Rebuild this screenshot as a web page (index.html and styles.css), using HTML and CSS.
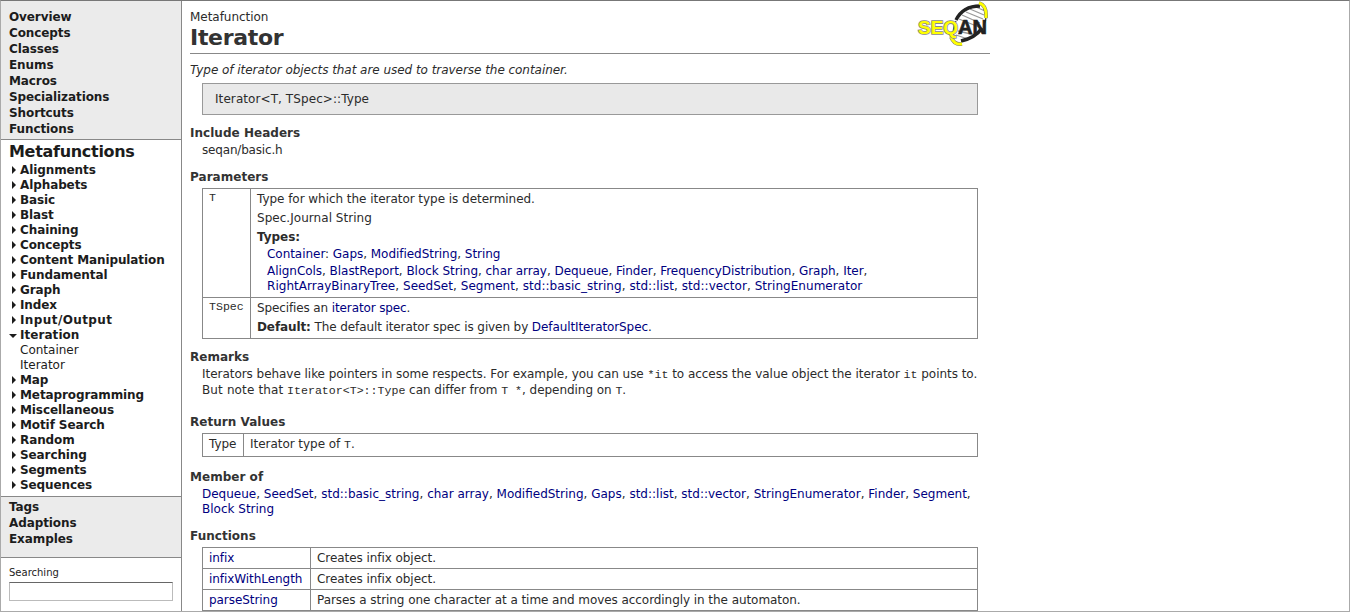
FILE: index.html
```html
<!DOCTYPE html>
<html lang="en">
<head>
<meta charset="utf-8">
<title>Iterator</title>
<link rel="stylesheet" href="styles.css">
</head>
<body>
<div class="page">
  <nav class="sidebar">
    <ul class="group group-top">
      <li>Overview</li><li>Concepts</li><li>Classes</li><li>Enums</li><li>Macros</li><li>Specializations</li><li>Shortcuts</li><li>Functions</li>
    </ul>
    <div class="current">
      <h2>Metafunctions</h2>
      <ul class="tree">
        <li>Alignments</li><li>Alphabets</li><li>Basic</li><li>Blast</li><li>Chaining</li><li>Concepts</li><li>Content Manipulation</li><li>Fundamental</li><li>Graph</li><li>Index</li><li class="loose">Input/Output</li><li class="open">Iteration</li><li class="leaf">Container</li><li class="leaf">Iterator</li><li>Map</li><li>Metaprogramming</li><li>Miscellaneous</li><li>Motif Search</li><li>Random</li><li>Searching</li><li>Segments</li><li>Sequences</li>
      </ul>
    </div>
    <ul class="group group-bottom">
      <li>Tags</li><li>Adaptions</li><li>Examples</li>
    </ul>
    <div class="search">
      <label for="q">Searching</label>
      <input id="q" type="text">
    </div>
  </nav>
  <main class="content">
    <header class="head">
      <div>
        <div class="kind">Metafunction</div>
        <h1>Iterator</h1>
      </div>
      <svg class="logo" width="74" height="46" viewBox="0 0 74 46">
        <path d="M39 38C36 26 44 9 66 5C72 16 63 33 45 40Z" fill="#fff"/>
        <path d="M50 11l17 7M54 8l14 6M60 6l9 4M46 14l18 8M42 30l17 4M40 34l12 4M43 18l20 8" stroke="#999" stroke-width="1.3"/>
        <path d="M40 19C44 11 52 5 64 5M45 40C54 38 62 33 66 27" fill="none" stroke="#222" stroke-width="3.4"/>
        <path d="M40 20C37 26 37 32 38 36M68 8C71 14 70 20 68 24" fill="none" stroke="#333" stroke-width="1.2"/>
        <path d="M63 2C70 4 70.500 11 70 17M35 36C37 41 40 44 46 43" fill="none" stroke="#777" stroke-width="3.800"/>
        <path d="M63 2C70 4 70.500 11 70 17M35 36C37 41 40 44 46 43" fill="none" stroke="#ff0" stroke-width="2.800"/>
        <text x="2" y="33" class="logo-text" textLength="69" lengthAdjust="spacingAndGlyphs"><tspan class="logo-seq">SEQ</tspan><tspan class="logo-an">AN</tspan></text>
      </svg>
    </header>
    <p class="summary">Type of iterator objects that are used to traverse the container.</p>
    <div class="signature">Iterator&lt;T, TSpec&gt;::Type</div>

    <h3>Include Headers</h3>
    <div class="text include">seqan/basic.h</div>

    <h3>Parameters</h3>
    <table class="params">
      <tr class="param-t">
        <td class="name"><code>T</code></td>
        <td>
          <p>Type for which the iterator type is determined.</p>
          <p class="wide">Spec.Journal String</p>
          <p><b>Types:</b></p>
          <div class="types"><a>Container</a>: <a>Gaps</a>, <a>ModifiedString</a>, <a>String</a></div>
          <div class="types more"><a>AlignCols</a>, <a>BlastReport</a>, <a>Block String</a>, <a>char array</a>, <a>Dequeue</a>, <a>Finder</a>, <a>FrequencyDistribution</a>, <a>Graph</a>, <a>Iter</a>,<br><span class="wide"><a>RightArrayBinaryTree</a>, <a>SeedSet</a>, <a>Segment</a>, <a>std::basic_string</a>, <a>std::list</a>, <a>std::vector</a>, <a>StringEnumerator</a></span></div>
        </td>
      </tr>
      <tr class="param-spec">
        <td class="name"><code>TSpec</code></td>
        <td>
          <p class="spec">Specifies an <a>iterator spec</a>.</p>
          <p class="tight"><b>Default:</b> The default iterator spec is given by <a>DefaultIteratorSpec</a>.</p>
        </td>
      </tr>
    </table>

    <h3>Remarks</h3>
    <div class="text remarks">Iterators behave like pointers in some respects. For example, you can use <code>*it</code> to access the value object the iterator <code>it</code> points to.<br><span class="lead">But note that</span> <code>Iterator&lt;T&gt;::Type</code> can differ from <code>T *</code>, depending on <code>T</code>.</div>

    <h3>Return Values</h3>
    <table class="returns">
      <tr><td class="name">Type</td><td>Iterator type of <code>T</code>.</td></tr>
    </table>

    <h3 class="after-returns">Member of</h3>
    <div class="text members"><a>Dequeue</a>, <a>SeedSet</a>, <a>std::basic_string</a>, <a>char array</a>, <a>ModifiedString</a>, <a>Gaps</a>, <a>std::list</a>, <a>std::vector</a>, <a>StringEnumerator</a>, <a>Finder</a>, <a>Segment</a>,<br><a>Block String</a></div>

    <h3>Functions</h3>
    <table class="functions">
      <tr><td class="name"><a>infix</a></td><td>Creates infix object.</td></tr>
      <tr><td class="name"><a>infixWithLength</a></td><td>Creates infix object.</td></tr>
      <tr><td class="name"><a>parseString</a></td><td>Parses a string one character at a time and moves accordingly in the automaton.</td></tr>
    </table>
  </main>
</div>
</body>
</html>
```
FILE: styles.css
```css
* { box-sizing: border-box; }
body {
  margin: 0;
  font: 12px/15px Verdana, "DejaVu Sans", sans-serif;
  color: #2b2b2b;
  background: #fff;
}
h1, h2, h3, p, ul { margin: 0; padding: 0; }
ul { list-style: none; }
.page {
  display: flex;
  width: 1350px;
  height: 612px;
  overflow: hidden;
  border: 1px solid #aaa;
  border-top-color: #777;
}
.sidebar {
  flex: none;
  width: 181px;
  border-right: 1px solid #888;
  font-weight: bold;
  letter-spacing: -.1px;
  color: #1c1c1c;
}
.group { background: #ebebeb; line-height: 16px; padding-left: 8px; }
.group-top { height: 139px; padding-top: 8px; border-bottom: 1px solid #888; }
.group-bottom { height: 61px; padding-top: 2px; border-bottom: 1px solid #888; }
.current { height: 357px; border-bottom: 1px solid #888; padding: 1px 0 0 8px; }
.current h2 { font-size: 16px; line-height: 22px; letter-spacing: -.3px; }
.tree li { display: flex; align-items: center; height: 15px; }
.tree li::before {
  content: "";
  width: 0;
  margin: -2px 4px 0 3px;
  border-left: 4px solid #1c1c1c;
  border-top: 4px solid transparent;
  border-bottom: 4px solid transparent;
}
.tree .open { letter-spacing: .05px; }
.tree .open::before {
  margin: 0 3px 0 0;
  border-top: 4px solid #1c1c1c;
  border-left: 4px solid transparent;
  border-right: 4px solid transparent;
  border-bottom: 0;
}
.tree .loose { letter-spacing: .4px; }
.tree .leaf { font-weight: normal; padding-left: 11px; letter-spacing: 0; }
.tree .leaf::before { display: none; }
.search { padding: 7px 8px 0; font-weight: normal; font-size: 10px; letter-spacing: 0; }
.search label { display: block; height: 17px; line-height: 15px; }
.search input {
  display: block;
  width: 164px;
  height: 19px;
  border: 1px solid #bbb;
  border-top-color: #666;
  background: #fff;
}
.content { width: 800px; margin-left: 8px; letter-spacing: -.04px; }
.head {
  display: flex;
  justify-content: space-between;
  height: 53px;
  padding-top: 9px;
  border-bottom: 1px solid #888;
}
.head h1 { font-size: 22px; line-height: 26px; letter-spacing: -.3px; color: #333; }
.logo { flex: none; margin: -9px 0 0; }
.logo-text { font: bold 20px "Liberation Sans", Arial, sans-serif; letter-spacing: 0; }
.logo-seq { fill: #ff0; stroke: #888; stroke-width: 1.6px; paint-order: stroke; font-size: 19px; }
.logo-an { fill: #222; stroke: #222; stroke-width: .7px; }
.summary { padding-top: 9px; height: 29px; font-style: italic; }
.signature {
  height: 32px;
  margin: 0 12px;
  padding: 8px 12px;
  border: 1px solid #999;
  background: #e9e9e9;
  letter-spacing: .08px;
}
h3 { font-size: 12px; line-height: 15px; letter-spacing: .03px; color: #333; padding-top: 11px; }
.text { margin-left: 12px; }
.include { height: 18px; padding-top: 2px; letter-spacing: -.18px; }
a { color: #000080; }
code { font: 11.6px/12px "Courier New", "Liberation Mono", monospace; letter-spacing: 0; }
.tight { letter-spacing: -.1px; }
.wide { letter-spacing: .04px; }
.lead { letter-spacing: .13px; }
table {
  width: 776px;
  margin: 3px 12px 0;
  border-collapse: collapse;
}
td { border: 1px solid #888; padding: 3px 6px 0; vertical-align: top; }
.params .name { padding-top: 1px; width: 48px; }
.param-t { height: 109px; }
.param-spec { height: 41px; }
.params p { height: 19px; line-height: 15px; }
.params .tight { height: 18px; }
.params .spec { letter-spacing: -.12px; }
.types { margin-left: 10px; margin-top: -2px; }
.types.more { margin-top: 2px; }
.remarks { line-height: 16px; height: 39px; padding-top: 1px; }
.returns { height: 24px; }
.returns .name { width: 41px; }
.after-returns { padding-top: 13px; }
.members { height: 33px; padding-top: 2px; letter-spacing: 0; }
.functions .name { width: 108px; }
.functions tr { height: 21px; }
.functions td { letter-spacing: -.06px; }
```
